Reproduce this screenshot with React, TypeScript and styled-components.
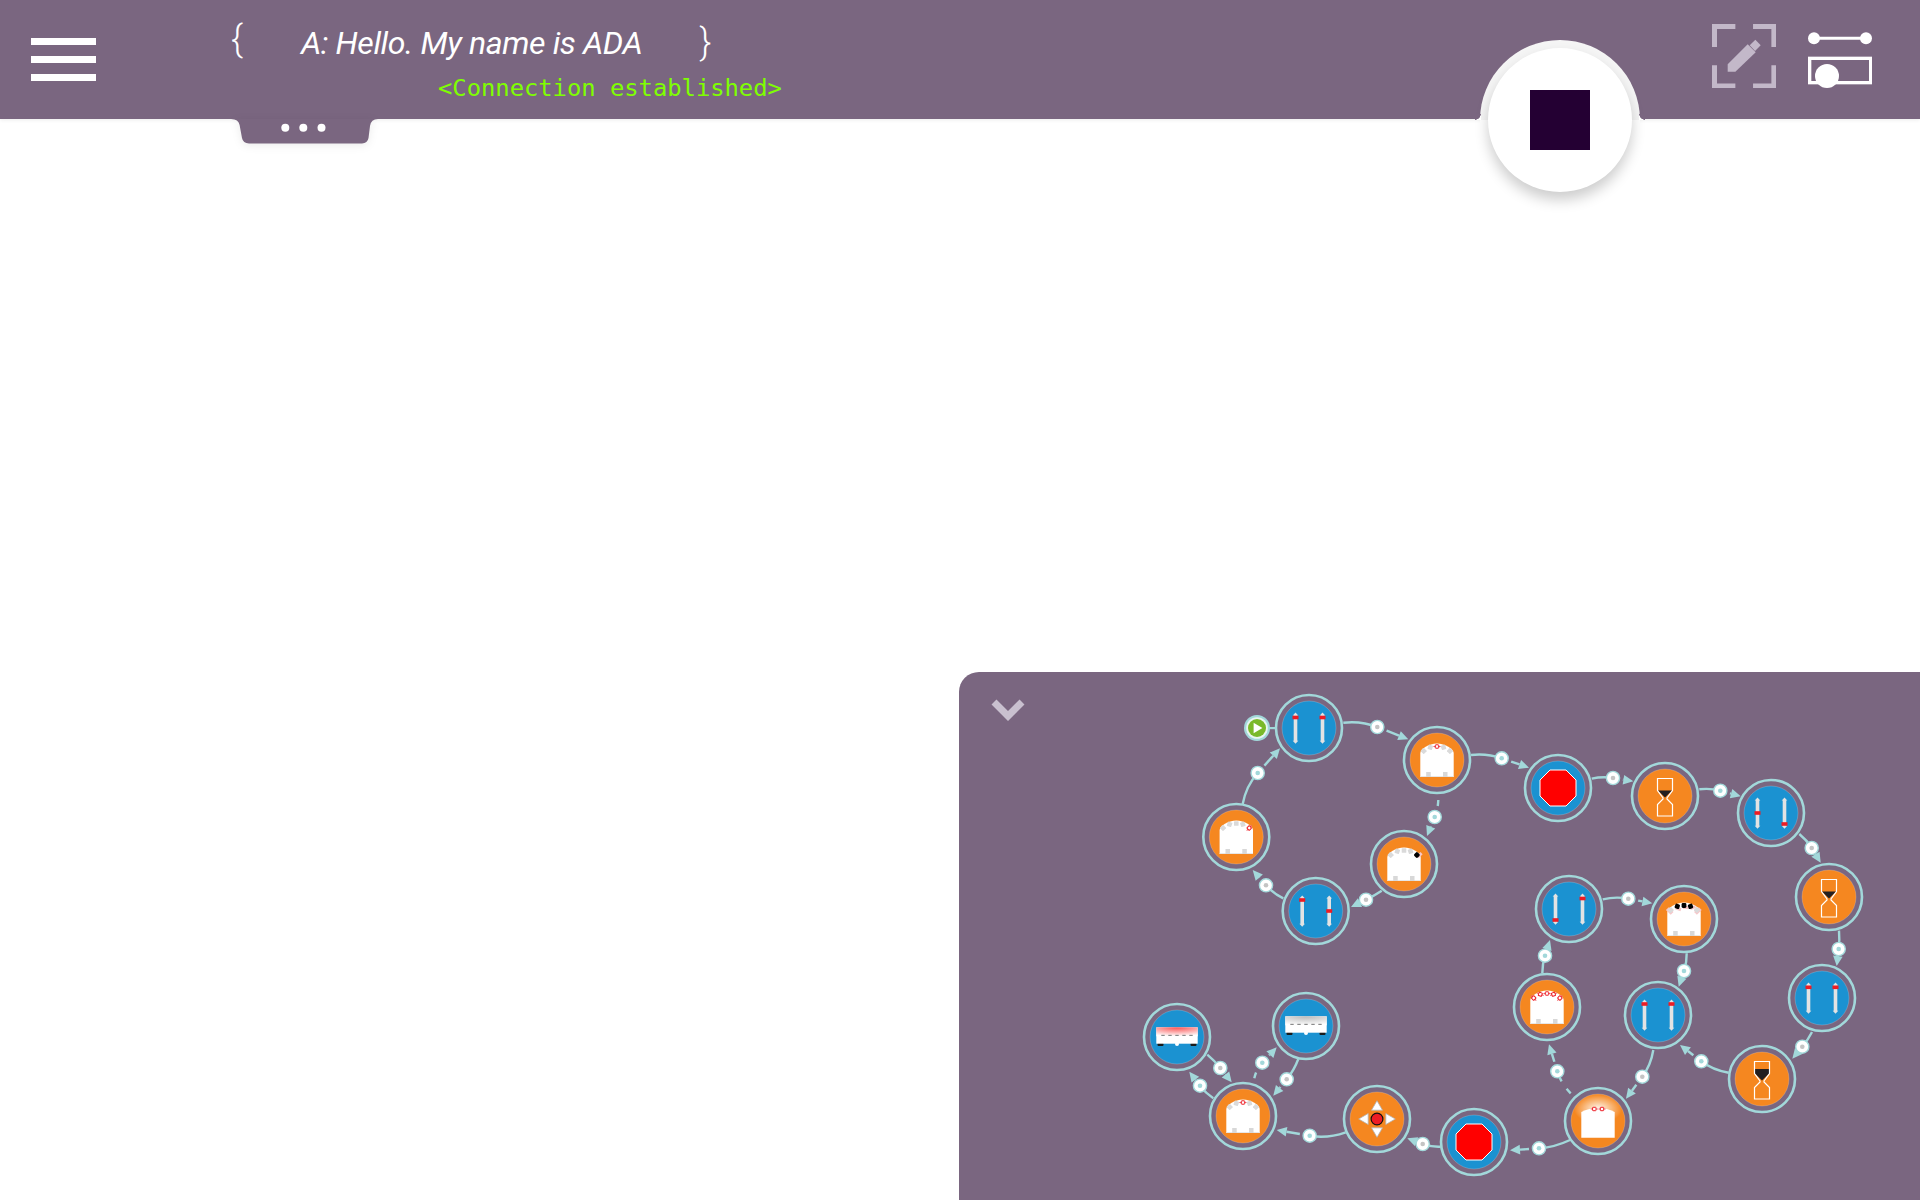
import React from "react";
import styled, { createGlobalStyle } from "styled-components";

const PURPLE = "#7a6680";
const TEAL = "#a2d8da";

const Global = createGlobalStyle`
  html, body { margin: 0; padding: 0; background: #fff; overflow: hidden; }
  #root { height: 100vh; }
`;

const Page = styled.div`
  position: relative;
  height: 100%;
  display: flex;
  flex-direction: column;
  background: #fff;
  overflow: hidden;
`;

const Header = styled.header`
  position: relative;
  flex: none;
  height: 119px;
  background: ${PURPLE};
  box-shadow: 0 1px 4px rgba(0, 0, 0, 0.08);
  display: flex;
  align-items: flex-start;
  padding-left: 31px;
`;

const MenuButton = styled.div`
  flex: none;
  width: 65px;
  margin-top: 38px;
  display: flex;
  flex-direction: column;
  gap: 11px;
`;

const MenuBar = styled.span`
  display: block;
  height: 7px;
  background: #fff;
`;

const Message = styled.div`
  margin-left: 135px;
  flex: none;
  width: 520px;
  display: flex;
  flex-direction: column;
`;

const SpeechLine = styled.div`
  display: flex;
  align-items: flex-start;
  height: 78px;
  color: #fff;
  font-family: Roboto, sans-serif;
  font-weight: 300;
`;

const Brace = styled.span<{ $top: number; $left: number }>`
  font-size: 36px;
  line-height: 42px;
  margin-top: ${(p) => p.$top}px;
  margin-left: ${(p) => p.$left}px;
`;

const Speech = styled.span`
  font-size: 32px;
  line-height: 38px;
  font-weight: 400;
  letter-spacing: -0.37px;
  font-style: italic;
  margin-left: 58px;
  margin-top: 24px;
  white-space: nowrap;
`;

const Status = styled.div`
  margin-left: 207px;
  margin-top: -3px;
  color: #7fff00;
  font-family: "DejaVu Sans Mono", monospace;
  font-size: 23.8px;
  line-height: 27px;
  white-space: nowrap;
`;

const TabShape = styled.svg`
  position: absolute;
  left: 228px;
  top: 119px;
  filter: drop-shadow(0 2px 4px rgba(0, 0, 0, 0.08));
`;

const Tools = styled.div`
  margin-left: auto;
  margin-right: 48px;
  margin-top: 24px;
  display: flex;
  gap: 32px;
  align-items: flex-start;
`;

const StopHalo = styled.div`
  position: absolute;
  left: 1480px;
  top: 40px;
  width: 160px;
  height: 160px;
  border-radius: 50%;
  background: linear-gradient(#f5f5f5 50%, #fff 50%);
  display: flex;
  align-items: center;
  justify-content: center;
  &::before,
  &::after {
    content: "";
    position: absolute;
    top: 74px;
    width: 6px;
    height: 6px;
  }
  &::before {
    left: -5px;
    background: radial-gradient(circle at 0 0, ${PURPLE} 5.5px, #fff 6px);
  }
  &::after {
    right: -5px;
    background: radial-gradient(circle at 100% 0, ${PURPLE} 5.5px, #fff 6px);
  }
`;

const StopButton = styled.button`
  width: 144px;
  height: 144px;
  padding: 0;
  border: none;
  border-radius: 50%;
  background: #fff;
  box-shadow: 0 8px 14px rgba(0, 0, 0, 0.2);
  display: flex;
  align-items: center;
  justify-content: center;
`;

const StopSquare = styled.span`
  display: block;
  width: 60px;
  height: 60px;
  background: #240033;
`;

const Main = styled.main`
  flex: 1;
  min-height: 0;
  display: flex;
  justify-content: flex-end;
  align-items: flex-end;
`;

const Panel = styled.section`
  position: relative;
  width: 961px;
  height: 528px;
  background: ${PURPLE};
  border-top-left-radius: 20px;
`;

const Chevron = styled.svg`
  position: absolute;
  left: 32px;
  top: 27px;
`;

const Diagram = styled.svg`
  display: block;
  width: 961px;
  height: 528px;
`;

const Ring = styled.circle`
  fill: none;
  stroke: ${TEAL};
  stroke-width: 2.6;
`;

const Disc = styled.circle<{ $color: string }>`
  fill: ${(p) => p.$color};
  stroke: rgba(255, 255, 255, 0.3);
  stroke-width: 0.6;
`;

const EdgeLine = styled.path<{ $dashed?: boolean }>`
  fill: none;
  stroke: ${TEAL};
  stroke-width: 2.4;
  ${(p) => (p.$dashed ? "stroke-dasharray: 6 9;" : "")}
`;

const EdgeHead = styled.polygon`
  fill: ${TEAL};
`;

const BLUE = "#1b92d1";
const ORANGE = "#f58720";

type P = [number, number];
type Edge = { s: P; b: P; e: P; grey?: boolean; dashed?: boolean };

const edges: Edge[] = [
  { s: [1343.3, 722.7], b: [1377.3, 727], e: [1408.3, 739.3], grey: true },
  { s: [1438.3, 800], b: [1434.7, 817], e: [1427, 836], dashed: true },
  { s: [1381.7, 890.7], b: [1366, 899.7], e: [1351, 907], grey: true },
  { s: [1283.3, 898.3], b: [1266, 885.3], e: [1252.7, 870], grey: true },
  { s: [1242.7, 804], b: [1257.7, 773], e: [1280, 748.3] },
  { s: [1471, 755], b: [1501.7, 758.3], e: [1529, 767.7] },
  { s: [1591.7, 778.7], b: [1613, 778], e: [1633.3, 781.3], grey: true },
  { s: [1699.3, 789.3], b: [1720.3, 790.7], e: [1740.7, 796.3] },
  { s: [1799.3, 834], b: [1811.7, 848], e: [1820.7, 862.7], grey: true },
  { s: [1839, 930.7], b: [1838.7, 949], e: [1836.7, 966] },
  { s: [1812, 1032], b: [1802.3, 1046.7], e: [1792.3, 1058.7], grey: true },
  { s: [1728.7, 1072.7], b: [1701.3, 1061.3], e: [1680, 1045] },
  { s: [1653.3, 1050], b: [1642.3, 1076.7], e: [1626, 1098.7], grey: true },
  { s: [1570.7, 1093.3], b: [1557.3, 1071.3], e: [1549, 1044.3], dashed: true },
  { s: [1542.3, 973.3], b: [1545, 955.7], e: [1550, 940] },
  { s: [1602.7, 899.3], b: [1628.3, 898.7], e: [1652.3, 903.3], grey: true },
  { s: [1686.7, 953.3], b: [1684, 971], e: [1678.7, 986.7] },
  { s: [1570, 1140], b: [1539, 1148.3], e: [1510, 1150.3] },
  { s: [1440.7, 1146.7], b: [1422.7, 1144], e: [1407.3, 1138.3], grey: true },
  { s: [1345.7, 1132.3], b: [1309.7, 1135.7], e: [1276.7, 1130] },
  { s: [1298.3, 1059], b: [1286.7, 1079.3], e: [1273.3, 1095.7], grey: true },
  { s: [1254.3, 1078.3], b: [1262.3, 1062.7], e: [1276.7, 1047.3], dashed: true },
  { s: [1207.3, 1054.7], b: [1220.3, 1068], e: [1231.7, 1082.3], grey: true },
  { s: [1213.3, 1098.3], b: [1200, 1085.7], e: [1189.3, 1071.7] },
];

function EdgeView({ s, b, e, grey, dashed }: Edge) {
  const lenOut = Math.hypot(e[0] - b[0], e[1] - b[1]) || 1;
  const lenIn = Math.hypot(b[0] - s[0], b[1] - s[1]);
  const dx = (e[0] - b[0]) / lenOut;
  const dy = (e[1] - b[1]) / lenOut;
  const c: P = [b[0] - (dx * lenIn) / 2, b[1] - (dy * lenIn) / 2];
  const L = 10;
  const W = 4.8;
  const base: P = [e[0] - dx * L, e[1] - dy * L];
  const pts = [
    `${e[0]},${e[1]}`,
    `${base[0] - dy * W},${base[1] + dx * W}`,
    `${base[0] + dy * W},${base[1] - dx * W}`,
  ].join(" ");
  return (
    <g>
      <EdgeLine $dashed={dashed} d={`M${s[0]},${s[1]} Q${c[0]},${c[1]} ${b[0]},${b[1]}`} />
      <EdgeLine d={`M${b[0] + dx * 10},${b[1] + dy * 10} L${base[0]},${base[1]}`} />
      <EdgeHead points={pts} />
      <circle cx={b[0]} cy={b[1]} r={6.6} fill="#fff" stroke={TEAL} strokeWidth={1.4} />
      <circle cx={b[0]} cy={b[1]} r={2.3} fill={grey ? "#c4c4c4" : TEAL} />
    </g>
  );
}

function Node({ x, y, color, children }: { x: number; y: number; color: string; children?: React.ReactNode }) {
  return (
    <g transform={`translate(${x} ${y})`}>
      <Ring r={33} />
      <Disc r={27} $color={color} />
      {children}
    </g>
  );
}

function Slider({ x, knob }: { x: number; knob: number }) {
  return (
    <g>
      <rect x={x - 1.8} y={-13} width={3.6} height={26} fill="#e3e3e3" />
      <polygon points={`${x},-15.5 ${x + 2.8},-12.5 ${x - 2.8},-12.5`} fill="#e3e3e3" />
      <polygon points={`${x},15.8 ${x + 2.8},12.8 ${x - 2.8},12.8`} fill="#e3e3e3" />
      <rect x={x - 3} y={knob - 1.8} width={6} height={3.6} fill="#ed1c24" />
    </g>
  );
}

function SliderNode({ x, y, l, r }: { x: number; y: number; l: number; r: number }) {
  return (
    <Node x={x} y={y} color={BLUE}>
      <Slider x={-13.5} knob={l} />
      <Slider x={13.5} knob={r} />
    </Node>
  );
}

const SENSORS: [number, number, number][] = [
  [-13.3, -9, 45],
  [-6.7, -12.7, 20],
  [0, -13.5, 0],
  [6.5, -12.7, -20],
  [12.9, -9, -45],
];

type Led = "off" | "red" | "black" | "pink";

function Sensor({ at, led }: { at: [number, number, number]; led: Led }) {
  const [x, y, a] = at;
  const t = `translate(${x} ${y}) rotate(${a})`;
  if (led === "red")
    return (
      <g transform={t}>
        <rect x={-3.6} y={-0.5} width={7.2} height={1} fill="#f0666b" />
        <rect x={-1.7} y={-1.7} width={3.4} height={3.4} rx={0.5} fill="#fff" stroke="#ed1c24" strokeWidth={1} />
      </g>
    );
  if (led === "black")
    return (
      <g transform={t}>
        <rect x={-1} y={0.5} width={5.6} height={3} fill="#f7c7c9" />
        <rect x={-2.4} y={-2.4} width={4.8} height={4.8} rx={1.3} fill="#000" />
      </g>
    );
  return (
    <g transform={t}>
      {led === "pink" && <rect x={-3.4} y={-0.6} width={6.8} height={4} fill="#f7c7c9" />}
      <rect x={-2.3} y={-2.3} width={4.6} height={4.6} rx={0.6} fill="#dadada" />
    </g>
  );
}

function RobotNode({ x, y, leds }: { x: number; y: number; leds: Led[] }) {
  return (
    <Node x={x} y={y} color={ORANGE}>
      <path d="M-16.7,17 V-7 C-16.7,-11 -8,-16.5 0,-16.5 C8,-16.5 16.7,-11 16.7,-7 V17 Z" fill="#fff" />
      <rect x={-16.7} y={16.2} width={33.4} height={0.8} fill="#e2e2e2" />
      <rect x={-10.8} y={12} width={4.5} height={5} fill="#d8d8d8" />
      <rect x={6} y={12} width={4.5} height={5} fill="#d8d8d8" />
      {SENSORS.map((at, i) => (
        <Sensor key={i} at={at} led={leds[i]} />
      ))}
    </Node>
  );
}

function GlowRobotNode({ x, y }: { x: number; y: number }) {
  return (
    <Node x={x} y={y} color={ORANGE}>
      <ellipse cx={0} cy={-12} rx={24} ry={14.5} fill="url(#whiteGlow)" />
      <path d="M-16.7,16.7 V-9 Q-9,-13 0,-13 Q9,-13 16.7,-9 V16.7 Z" fill="#fff" />
      <Sensor at={[-3.7, -12, 0]} led="red" />
      <Sensor at={[4, -12, 0]} led="red" />
    </Node>
  );
}

function HourglassNode({ x, y, full }: { x: number; y: number; full?: boolean }) {
  return (
    <Node x={x} y={y} color={ORANGE}>
      {full ? (
        <polygon points="-7,-10 7,-10 7,-5.5 0,1.5 -7,-5.5" fill="#231f20" />
      ) : (
        <polygon points="-7,-5.5 7,-5.5 0,1.5" fill="#231f20" />
      )}
      <path
        d="M-7.5,-17.5 H7.5 V-5.5 L2,2 V3 L7.5,8.5 V20 H-7.5 V8.5 L-2,3 V2 L-7.5,-5.5 Z"
        fill="none"
        stroke="#fff"
        strokeWidth={1.2}
      />
    </Node>
  );
}

function StopNode({ x, y }: { x: number; y: number }) {
  return (
    <Node x={x} y={y} color={BLUE}>
      <polygon
        points="-8,-18 8,-18 18,-8 18,8 8,18 -8,18 -18,8 -18,-8"
        fill="#f00"
        stroke="#fff"
        strokeWidth={1}
      />
    </Node>
  );
}

function BusNode({ x, y, glow }: { x: number; y: number; glow: string }) {
  return (
    <Node x={x} y={y} color={BLUE}>
      <rect x={-19.5} y={6} width={6} height={3} rx={1} fill="#1a1a1a" />
      <rect x={13.5} y={6} width={6} height={3} rx={1} fill="#1a1a1a" />
      <rect x={-20.7} y={-9.7} width={41.4} height={16.4} fill="#fff" />
      <rect x={-20.7} y={-9.7} width={41.4} height={9} fill={`url(#${glow})`} />
      <circle cx={0} cy={7} r={2} fill="#fff" />
      {[-14, -7, 0, 7, 14].map((d) => (
        <rect key={d} x={d - 1.7} y={-2.2} width={3.4} height={1.2} fill="#8a8a8a" />
      ))}
    </Node>
  );
}

function DpadNode({ x, y }: { x: number; y: number }) {
  const tri = { fill: "#fff", stroke: "#b3b3b3", strokeWidth: 0.8 };
  return (
    <Node x={x} y={y} color={ORANGE}>
      <polygon points="0,-18.3 5.5,-8.8 -5.5,-8.8" {...tri} />
      <polygon points="0,18.3 5.5,8.8 -5.5,8.8" {...tri} />
      <polygon points="-18.3,0 -8.8,5.5 -8.8,-5.5" {...tri} />
      <polygon points="18.3,0 8.8,5.5 8.8,-5.5" {...tri} />
      <circle r={5.9} fill="#ed1c24" stroke="#111" strokeWidth={1.2} />
    </Node>
  );
}

function PlayBadge({ x, y }: { x: number; y: number }) {
  return (
    <g transform={`translate(${x} ${y})`}>
      <rect x={12} y={-1} width={8} height={2.2} fill={TEAL} />
      <circle r={13} fill={TEAL} />
      <circle r={10.8} fill="#e9f5f1" />
      <circle r={9} fill="#7ab929" />
      <polygon points="-3.4,-5.2 5.4,0 -3.4,5.2" fill="#fff" />
    </g>
  );
}

export default function App() {
  return (
    <>
      <Global />
      <Page>
        <Header>
          <MenuButton>
            <MenuBar />
            <MenuBar />
            <MenuBar />
          </MenuButton>
          <Message>
            <SpeechLine>
              <Brace $top={18} $left={0}>{"{"}</Brace>
              <Speech>A: Hello. My name is ADA</Speech>
              <Brace $top={21} $left={57}>{"}"}</Brace>
            </SpeechLine>
            <Status>&lt;Connection established&gt;</Status>
          </Message>
          <TabShape width="152" height="26" viewBox="0 0 152 26">
            <path
              d="M3,0 Q10.5,0 11.6,6 L14,19 Q15,24.4 21,24.4 H134 Q139.5,24.4 140.5,19 L142,7 Q143,0 150,0 Z"
              fill={PURPLE}
            />
            <circle cx="57.3" cy="8.7" r="4" fill="#fff" />
            <circle cx="75.3" cy="8.7" r="4" fill="#fff" />
            <circle cx="93.5" cy="8.7" r="4" fill="#fff" />
          </TabShape>
          <Tools>
            <svg width="64.4" height="64.4" viewBox="815 71 193 193">
              <g fill="none" stroke="#c3b8c9" strokeWidth="15">
                <path d="M885,78.5 H822.5 V140" />
                <path d="M938,78.5 H1000.5 V140" />
                <path d="M822.5,195 V256.5 H885" />
                <path d="M1000.5,195 V256.5 H938" />
              </g>
              <path d="M862,214 V192 L922,132 L946,156 L885,214 Z" fill="#c3b8c9" />
              <path d="M928,135 L945,118 L961,135 L944,152 Z" fill="#c3b8c9" />
            </svg>
            <svg width="64" height="64" viewBox="1104 72 192 192">
              <line x1="1122" y1="115" x2="1278" y2="115" stroke="#fff" strokeWidth="9" />
              <circle cx="1122" cy="115" r="18" fill="#fff" />
              <circle cx="1278" cy="115" r="18" fill="#fff" />
              <rect x="1109" y="175" width="183" height="73" fill="none" stroke="#fff" strokeWidth="10" />
              <circle cx="1161" cy="228" r="36" fill="#fff" />
            </svg>
          </Tools>
        </Header>
        <StopHalo>
          <StopButton>
            <StopSquare />
          </StopButton>
        </StopHalo>
        <Main>
          <Panel>
            <Chevron width="34" height="23" viewBox="0 0 34 23">
              <path d="M3,3 L17,17 L31,3" fill="none" stroke="#c9c0cf" strokeWidth="7" />
            </Chevron>
            <Diagram viewBox="959 672 961 528">
              <defs>
                <radialGradient id="whiteGlow">
                  <stop offset="0" stopColor="#fff" stopOpacity="0.95" />
                  <stop offset="1" stopColor="#fff" stopOpacity="0" />
                </radialGradient>
                <radialGradient id="redBus" cx="0.5" cy="0" r="1">
                  <stop offset="0" stopColor="#fb4f4f" />
                  <stop offset="1" stopColor="#fff" />
                </radialGradient>
                <radialGradient id="greyBus" cx="0.5" cy="0" r="1">
                  <stop offset="0" stopColor="#b8b8b8" />
                  <stop offset="1" stopColor="#fff" />
                </radialGradient>
              </defs>
              {edges.map((e, i) => (
                <EdgeView key={i} {...e} />
              ))}
              <PlayBadge x={1257} y={728} />
              <SliderNode x={1309} y={728} l={-10.5} r={-10.5} />
              <RobotNode x={1437} y={760} leds={["off", "off", "red", "off", "off"]} />
              <RobotNode x={1236.3} y={837} leds={["off", "off", "off", "off", "red"]} />
              <RobotNode x={1404} y={864} leds={["off", "off", "off", "off", "black"]} />
              <SliderNode x={1315.7} y={911} l={-11} r={0} />
              <StopNode x={1558} y={788} />
              <HourglassNode x={1665} y={796} />
              <SliderNode x={1771} y={813} l={0} r={11} />
              <HourglassNode x={1829} y={897} />
              <SliderNode x={1569} y={909} l={11} r={-10.5} />
              <RobotNode x={1684} y={919} leds={["pink", "black", "black", "black", "pink"]} />
              <BusNode x={1177} y={1037} glow="redBus" />
              <BusNode x={1306} y={1026} glow="greyBus" />
              <RobotNode x={1243} y={1116} leds={["off", "off", "red", "off", "off"]} />
              <DpadNode x={1377} y={1119} />
              <StopNode x={1474} y={1142} />
              <RobotNode x={1547} y={1007} leds={["red", "red", "red", "red", "red"]} />
              <SliderNode x={1658} y={1015} l={-11} r={-11} />
              <SliderNode x={1822} y={998} l={-10.7} r={-10.7} />
              <HourglassNode x={1762} y={1079} full />
              <GlowRobotNode x={1598} y={1121} />
            </Diagram>
          </Panel>
        </Main>
      </Page>
    </>
  );
}
